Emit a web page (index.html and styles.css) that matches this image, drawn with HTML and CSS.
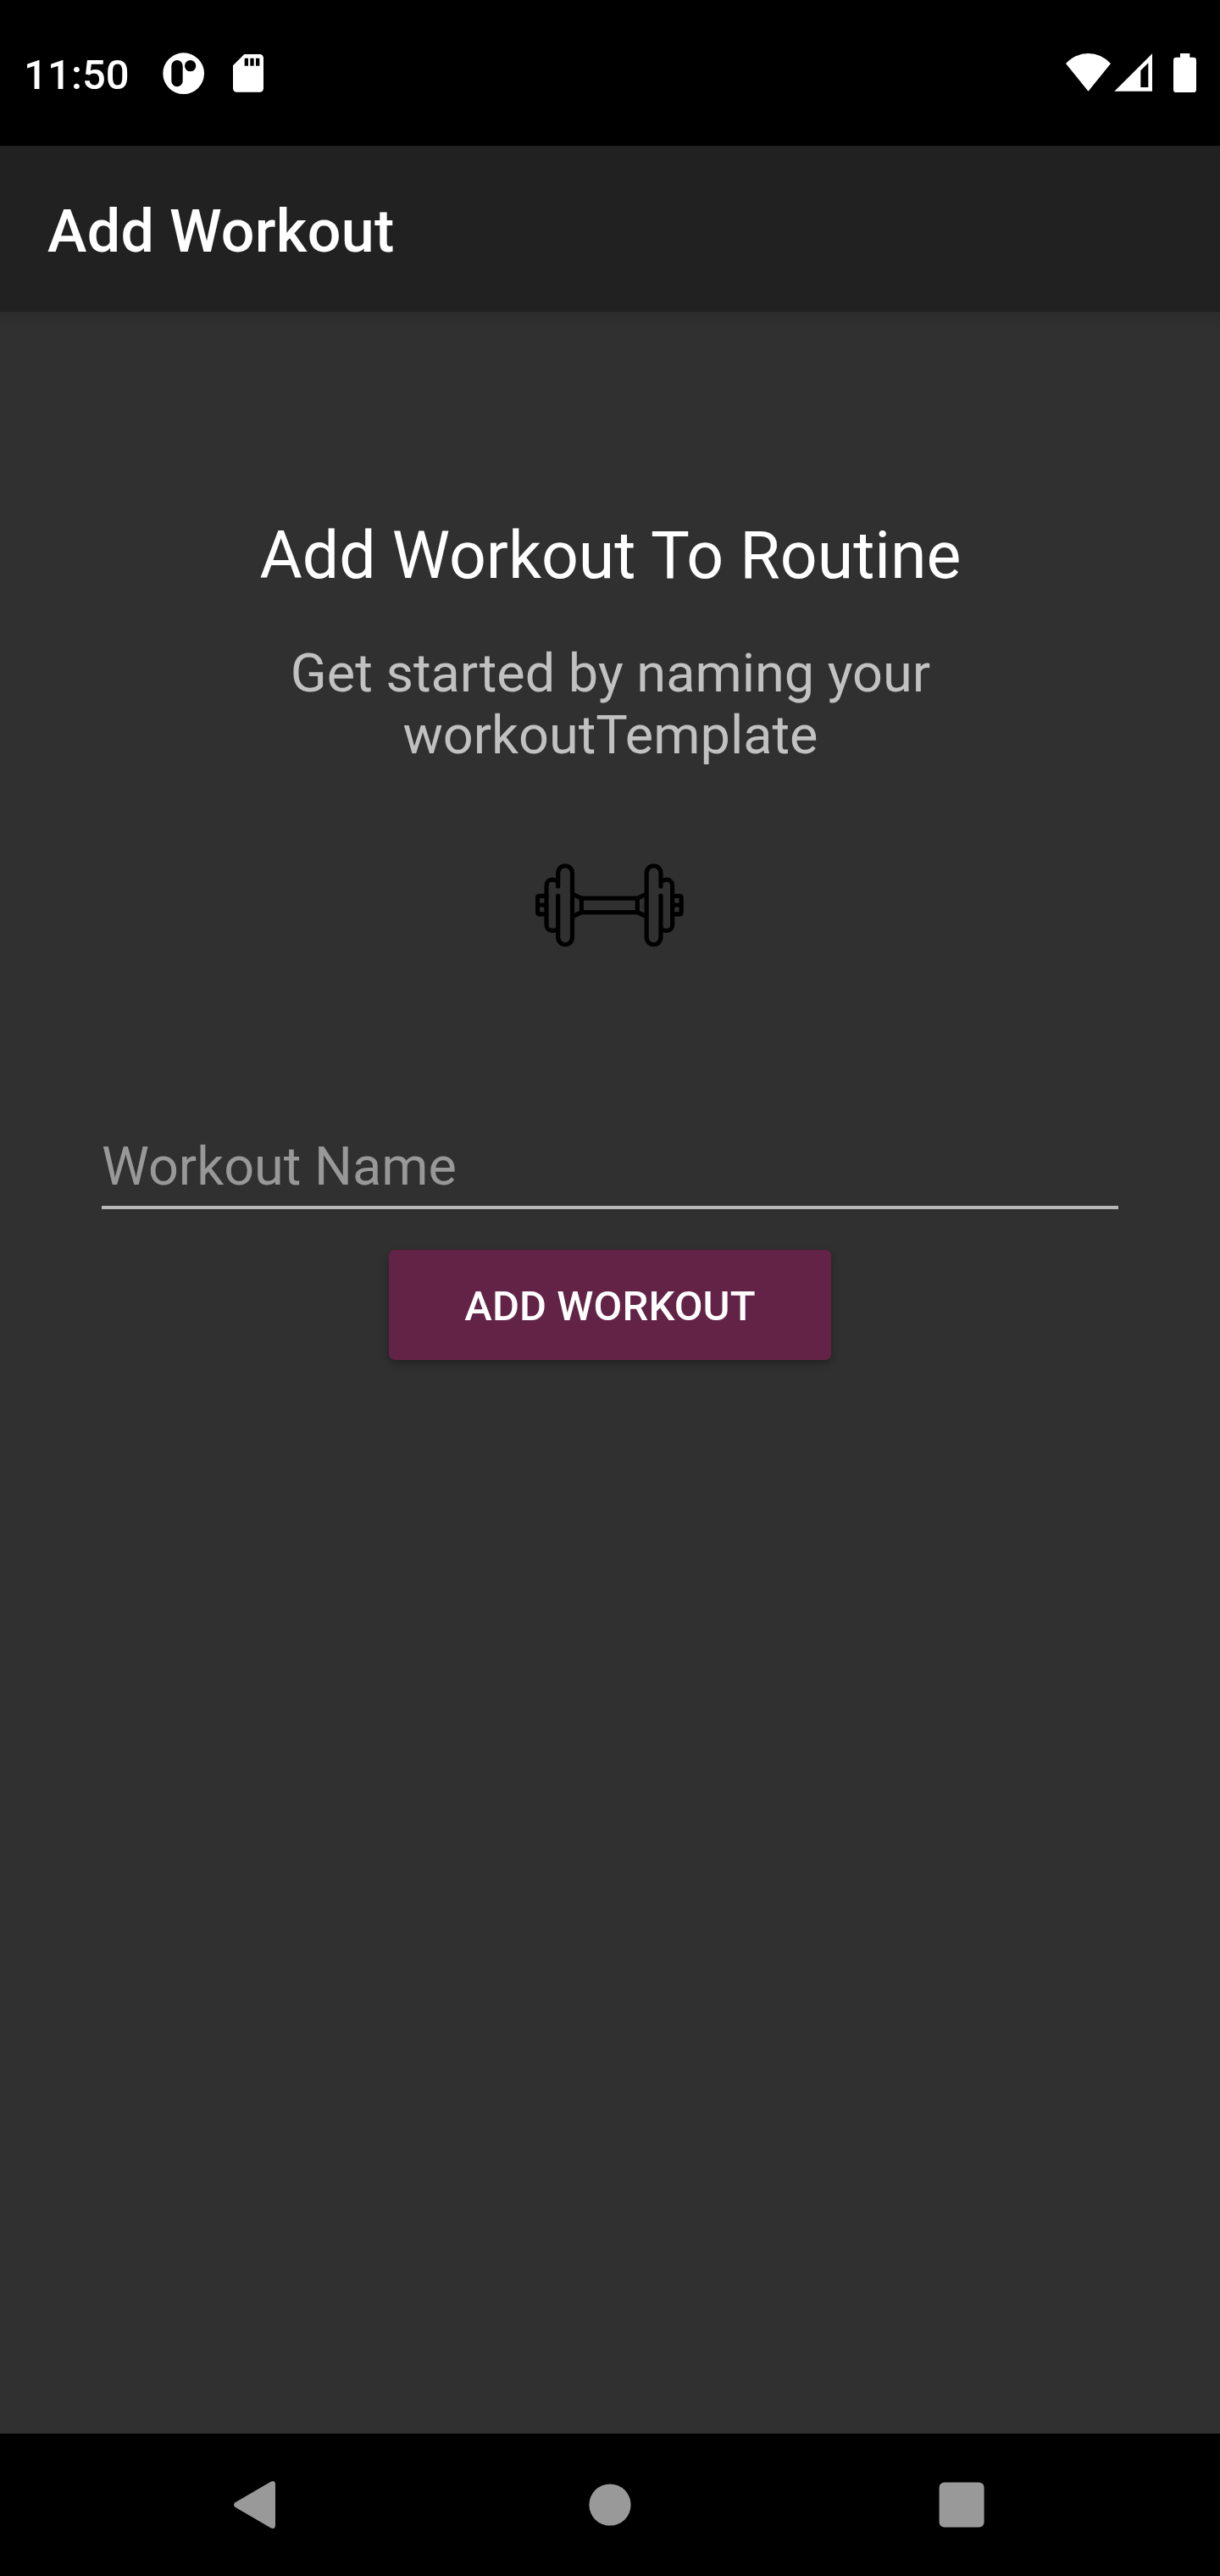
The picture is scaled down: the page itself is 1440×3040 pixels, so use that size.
FILE: index.html
```html
<!DOCTYPE html>
<html lang="en">
<head>
<meta charset="utf-8">
<title>Add Workout</title>
<link rel="stylesheet" href="styles.css">
</head>
<body>
<div class="screen">
  <div class="status-bar">
    <span class="clock">11:50</span>
    <svg class="icon-app" viewBox="575 65 147 147"><path fill="#fff" fill-rule="evenodd" d="M649 66a73 73 0 1 0 0 146a73 73 0 1 0 0-146zM626 92a20 20 0 0 1 20 20V166a20 20 0 0 1-40 0V112a20 20 0 0 1 20-20zM673 92a20 20 0 1 1 0 40a20 20 0 1 1 0-40z"/></svg>
    <svg class="icon-sd" viewBox="826 72 108 134"><path fill="#fff" fill-rule="evenodd" d="M866 72H921a13 13 0 0 1 13 13V193a13 13 0 0 1-13 13H839a13 13 0 0 1-13-13V112zM867 86V113H880V86zM887 86V113H900V86zM907 86V113H920V86z"/></svg>
    <span class="spacer"></span>
    <svg class="icon-wifi" viewBox="114 69 159 135"><path fill="#fff" d="M114 105Q148 69 193.500 69Q239 69 273 105L193.500 203z"/></svg>
    <svg class="icon-cell" viewBox="285 69 135 135"><path fill="#fff" fill-rule="evenodd" d="M420 70V203H286zM406 103L379 130V189H406z"/></svg>
    <svg class="icon-battery" viewBox="495 69 81 138"><path fill="#fff" d="M519 69H553V83H566a10 10 0 0 1 10 10V197a10 10 0 0 1-10 10H505a10 10 0 0 1-10-10V93a10 10 0 0 1 10-10H519z"/></svg>
  </div>
  <header class="app-bar"><h1 class="app-title">Add Workout</h1></header>
  <main class="content">
    <h2 class="heading">Add Workout To Routine</h2>
    <p class="subtitle">Get started by naming your<br>workoutTemplate</p>
    <svg class="dumbbell" viewBox="66 58 528 296">
      <defs>
        <g id="end">
          <path d="M146 139V91.500a25.250 25.250 0 0 1 50.500 0V320a25.250 25.250 0 0 1-50.500 0V172"/>
          <path d="M141 120Q134 115.500 125 115.500a20 20 0 0 0-20 20V276a20 20 0 0 0 20 20Q134 296 141 292"/>
          <path d="M105 173H80q-6.500 0-6.500 6.500V231q0 6.500 6.500 6.500H105M74 205H105"/>
          <path d="M199 167.500L229 181.500V231L199 245"/>
        </g>
      </defs>
      <g fill="none" stroke="#000" stroke-width="15.500" stroke-linecap="round" stroke-linejoin="round">
        <use href="#end"/>
        <use href="#end" transform="translate(656 0) scale(-1 1)"/>
        <path d="M229 181.500H427M229 231H427"/>
      </g>
    </svg>
    <div class="field"><span class="hint">Workout Name</span></div>
    <button class="button" type="button">ADD WORKOUT</button>
  </main>
  <nav class="nav-bar">
    <svg class="nav-icon" viewBox="0 0 60 60"><path fill="#999" d="M3.500 27.200L46 2.400Q51 .800 51 6V54Q51 59.200 46 57.600L3.500 32.800Q.500 30 3.500 27.200z"/></svg>
    <svg class="nav-icon" viewBox="0 0 60 60"><circle cx="30" cy="30" r="24.600" fill="#999"/></svg>
    <svg class="nav-icon" viewBox="0 0 60 60"><rect x="2.600" y="3.500" width="53" height="53" rx="6" fill="#999"/></svg>
  </nav>
</div>
</body>
</html>
```
FILE: styles.css
```css
* { box-sizing: border-box; }

body {
  margin: 0;
  background: #303030;
  color: #fff;
  font-family: Roboto, sans-serif;
}

.screen {
  display: flex;
  flex-direction: column;
  width: 1440px;
  height: 3040px;
}

.screen svg { display: block; flex: none; }

.status-bar {
  display: flex;
  align-items: flex-start;
  height: 172px;
  padding: 0 28px 0 28px;
  background: #000;
}

.clock {
  width: 163.500px;
  margin-top: 60px;
  font-size: 49px;
  font-weight: 500;
  line-height: 58px;
  letter-spacing: .1px;
}

.icon-app { width: 49px; height: 49px; margin-top: 61.700px; }
.icon-sd { width: 36px; height: 44.700px; margin: 64px 0 0 34.800px; }
.spacer { flex: 1; }
.icon-wifi { width: 53px; height: 45px; margin-top: 63px; }
.icon-cell { width: 45px; height: 45px; margin: 63px 25px 0 4px; }
.icon-battery { width: 27px; height: 46px; margin-top: 63px; }

.app-bar {
  display: flex;
  align-items: center;
  height: 196px;
  padding: 6px 56px 0;
  background: #212121;
}

.app-title {
  margin: 0;
  font-size: 70px;
  font-weight: 500;
  line-height: 82px;
  letter-spacing: .3px;
}

.content {
  display: flex;
  flex: 1;
  flex-direction: column;
  align-items: center;
  padding: 243px 120px 0;
  background: linear-gradient(#2c2c2c, #303030 22px);
}

.heading {
  margin: 0 0 57px;
  padding-left: 1px;
  font-size: 77px;
  font-weight: 400;
  line-height: 90px;
}

.subtitle {
  margin: 0 0 115.300px;
  padding-left: 1px;
  color: #c1c1c1;
  font-size: 63px;
  line-height: 73px;
  text-align: center;
}

.dumbbell { width: 176px; height: 98.700px; }

.field {
  width: 1200px;
  height: 87px;
  margin-top: 222px;
  border-bottom: 4px solid #b8b8b8;
}

.hint {
  color: #989898;
  font-size: 63px;
  line-height: 74px;
}

.button {
  width: 522px;
  height: 130px;
  margin-top: 48px;
  padding: 5px 0 0;
  border: 0;
  border-radius: 7px;
  background: #622347;
  box-shadow: 0 4px 8px rgba(0, 0, 0, .3);
  color: #fff;
  font: 500 49px/58px Roboto, sans-serif;
  letter-spacing: .1px;
}

.nav-bar {
  display: flex;
  justify-content: space-between;
  align-items: center;
  height: 168px;
  padding: 0 274px;
  background: #000;
}

.nav-icon { width: 60px; height: 60px; }
```
